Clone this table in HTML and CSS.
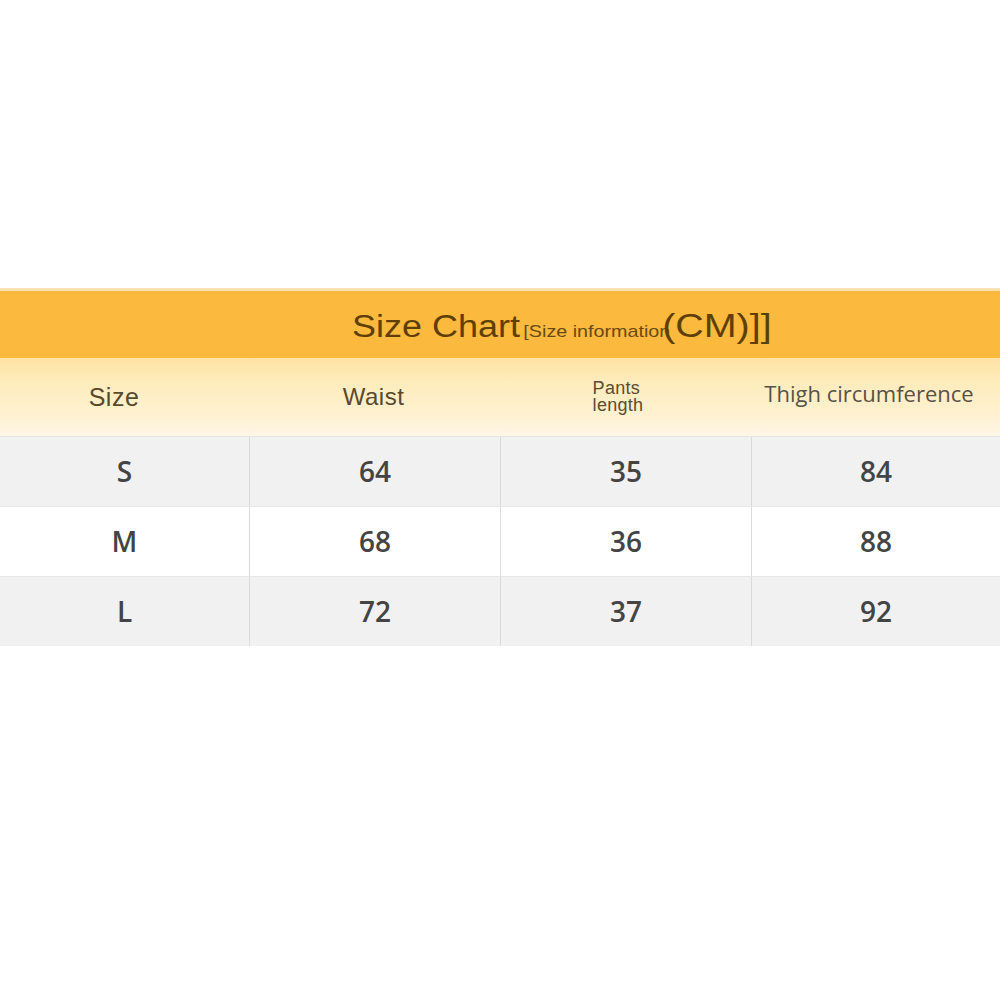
FILE: index.html
```html
<!DOCTYPE html>
<html>
<head>
<meta charset="utf-8">
<link rel="stylesheet" href="styles.css">
</head>
<body>
<div class="page">
  <div class="banner">
    <div class="title">
      <span class="t-main">Size Chart</span><span class="t-sub">[Size information</span><span class="t-cm">(CM)]]</span>
    </div>
  </div>
  <div class="chart">
    <div class="head">
      <div class="hcell h-size">Size</div>
      <div class="hcell h-waist">Waist</div>
      <div class="hcell h-pants"><span>Pants<br>length</span></div>
      <div class="hcell h-thigh">Thigh circumference</div>
    </div>
    <div class="row gray">
      <div class="cell">S</div><div class="cell">64</div><div class="cell">35</div><div class="cell">84</div>
    </div>
    <div class="row white">
      <div class="cell">M</div><div class="cell">68</div><div class="cell">36</div><div class="cell">88</div>
    </div>
    <div class="row gray">
      <div class="cell">L</div><div class="cell">72</div><div class="cell">37</div><div class="cell">92</div>
    </div>
  </div>
</div>
</body>
</html>
```
FILE: styles.css
```css
html, body {
  margin: 0;
  padding: 0;
  background: #ffffff;
}
.page {
  width: 1000px;
  height: 1000px;
  padding-top: 288px;
  box-sizing: border-box;
  font-family: "Liberation Sans", Arial, sans-serif;
}
.banner {
  height: 70px;
  background: #fbb93d;
  border-top: 3px solid #fbe2b0;
  box-sizing: border-box;
  display: flex;
  align-items: center;
  padding-left: 352px;
}
.title {
  display: inline-block;
  white-space: nowrap;
  transform: scaleX(1.16);
  transform-origin: left center;
  color: #5e3f07;
  line-height: 1;
  margin-top: 0;
}
.t-main {
  font-size: 31px;
}
.t-sub {
  font-size: 17px;
  margin-left: 3px;
  color: #6a4a12;
}
.t-cm {
  font-size: 34px;
  margin-left: -7px;
}
.chart {
  display: flex;
  flex-direction: column;
}
.head {
  height: 78px;
  display: grid;
  grid-template-columns: 250px 251px 251px 248px;
  background: linear-gradient(to bottom, #fde3a2 0%, #ffecbc 30%, #fff2d2 75%, #fff6e6 100%);
}
.hcell {
  display: flex;
  align-items: center;
  justify-content: center;
  color: #5a4a2c;
}
.h-size {
  font-size: 25px;
  letter-spacing: 0.5px;
  padding-right: 22px;
}
.h-waist {
  font-size: 24px;
  letter-spacing: 0.5px;
  padding-right: 4px;
}
.h-pants {
  font-size: 18px;
  line-height: 17px;
  letter-spacing: 0.3px;
  padding-right: 17px;
  padding-top: 0;
  color: #5c4c30;
}
.h-thigh {
  font-family: "Open Sans", sans-serif;
  font-size: 22px;
  color: #585248;
  padding-right: 14px;
  margin-top: -8px;
}
.row {
  height: 70px;
  display: grid;
  grid-template-columns: 250px 251px 251px 248px;
  border-top: 1px solid #e6e6e6;
  box-sizing: border-box;
}
.row.gray {
  background: #f1f1f1;
}
.row.white {
  background: #ffffff;
}
.cell {
  display: flex;
  align-items: center;
  justify-content: center;
  font-family: "Open Sans", sans-serif;
  font-weight: 600;
  font-size: 28px;
  color: #444444;
  border-right: 1px solid #dadada;
  padding-bottom: 2px;
}
.cell:last-child {
  border-right: none;
}
```
